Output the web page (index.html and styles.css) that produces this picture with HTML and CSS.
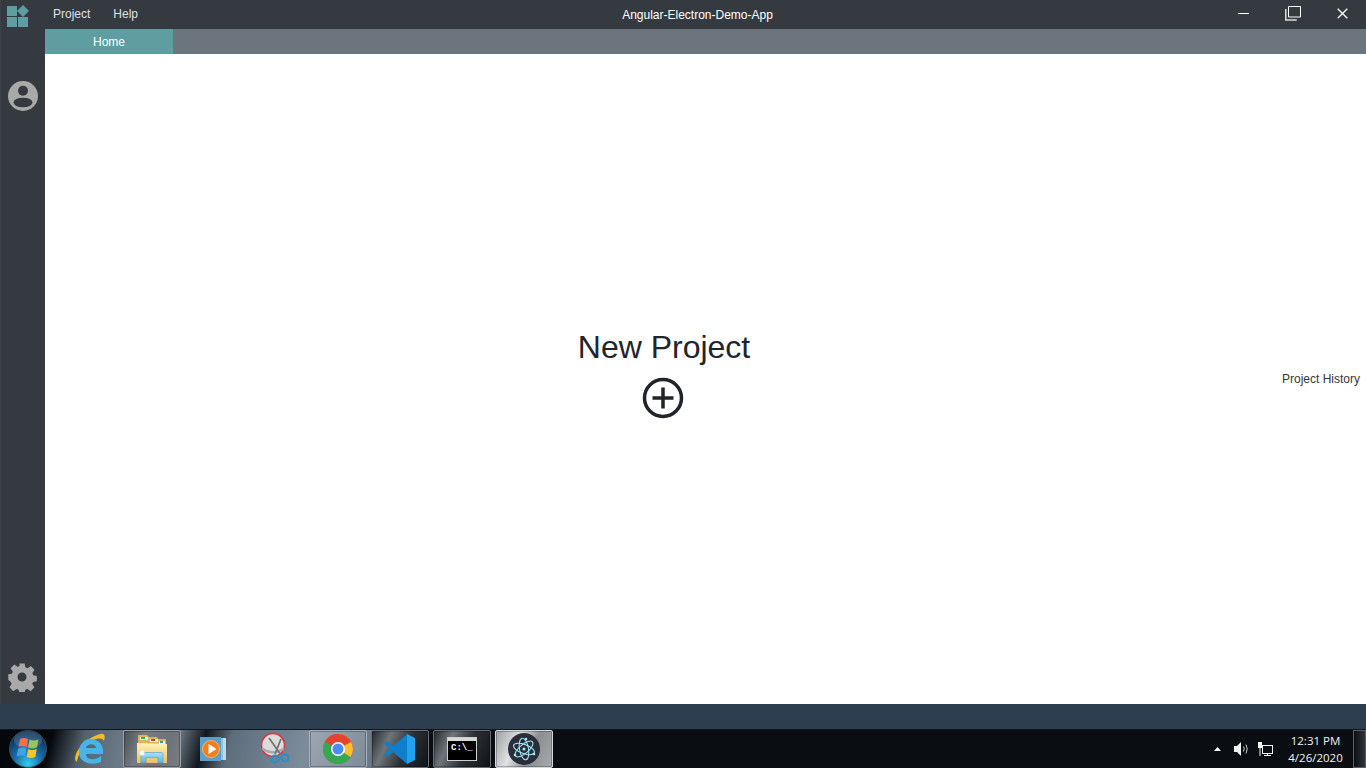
FILE: index.html
```html
<!DOCTYPE html>
<html lang="en">
<head>
<meta charset="utf-8">
<title>Angular-Electron-Demo-App</title>
<link rel="stylesheet" href="styles.css">
</head>
<body>
<div class="app">
  <aside class="rail">
    <div class="rail-logo">
      <svg width="22" height="22" viewBox="0 0 22 22"><rect x="0" y="1" width="10" height="10" fill="#5f9ea0"/><rect x="0" y="12" width="10" height="10" fill="#5f9ea0"/><rect x="11" y="12" width="10" height="10" fill="#5f9ea0"/><polygon points="16,0 22,6 16,12 10,6" fill="#5f9ea0"/></svg>
    </div>
    <div class="rail-user">
      <svg width="30" height="30" viewBox="0 0 30 30"><circle cx="15" cy="15" r="15" fill="#a9a9a9"/><circle cx="15" cy="9.7" r="5" fill="#343a40"/><ellipse cx="15" cy="21.5" rx="9.500" ry="4.800" fill="#343a40"/></svg>
    </div>
    <div class="rail-gear">
      <svg width="30" height="30" viewBox="0 0 24 24"><path fill="#a9a9a9" fill-rule="evenodd" d="M9.6 0h4.800l.6 3.400 1.900.8 2.900-2 3.400 3.400-2 2.900.8 1.900 3.200.6v4.800l-3.300.6-.8 1.900 2 2.900-3.400 3.400-2.900-2-1.900.8-.5 3.400H9.600l-.6-3.400-1.900-.8-2.900 2-3.400-3.400 2-2.900-.8-1.900L-.2 14.400V9.600L3 9l.8-1.900-2-2.900L5.200.8l2.900 2 1.900-.8zM12 8a4 4 0 1 0 0 8 4 4 0 0 0 0-8z" transform="translate(.4 1.200) scale(.9)"/></svg>
    </div>
  </aside>
  <div class="main">
    <header class="titlebar">
      <nav class="menu"><span class="menu-item">Project</span><span class="menu-item">Help</span></nav>
      <div class="app-title">Angular-Electron-Demo-App</div>
      <div class="win-controls">
        <svg class="win-min" width="11" height="11" viewBox="0 0 11 11"><rect x="0" y="5" width="11" height="1" fill="#fff"/></svg>
        <svg class="win-max" width="16" height="15" viewBox="0 0 16 15"><path d="M3.500.5h12v10.500h-12z" fill="none" stroke="#fff"/><path d="M.75 3v11h11" fill="none" stroke="#dcdcdc" stroke-width="1.500"/></svg>
        <svg class="win-close" width="11" height="11" viewBox="0 0 11 11"><path d="M.7.7l9.600 9.600M10.300.7L.7 10.300" stroke="#fff" stroke-width="1.300"/></svg>
      </div>
    </header>
    <div class="tabbar"><div class="tab">Home</div></div>
    <main class="content">
      <div class="new-project">
        <div class="new-title">New Project</div>
        <svg class="new-icon" width="42" height="42" viewBox="0 0 42 42"><circle cx="21" cy="21" r="18.500" fill="none" stroke="#212529" stroke-width="3.500"/><path d="M21 10.500v21M10.500 21h21" stroke="#212529" stroke-width="3.500"/></svg>
      </div>
      <div class="history">Project History</div>
    </main>
  </div>
</div>
<div class="statusbar"></div>
<footer class="taskbar">
  <div class="start">
    <svg width="38" height="38" viewBox="0 0 38 38">
      <defs>
        <radialGradient id="orb" cx="50%" cy="90%" r="80%"><stop offset="0" stop-color="#2fd0f2"/><stop offset=".45" stop-color="#1a6fb0"/><stop offset="1" stop-color="#0c3358"/></radialGradient>
      </defs>
      <circle cx="19" cy="19" r="18.500" fill="url(#orb)" stroke="#3d4b52"/>
      <path d="M11 9q4-2 8 0l-1.300 8q-4-2-8.200 0z" fill="#f0592e"/>
      <path d="M20.500 9.500q4 2 9 0l-1.500 8q-4.500 2-9 0z" fill="#86bf3c"/>
      <path d="M9.200 18.500q4.300-2 8.300 0l-1.300 8q-4-2-8.700 0z" fill="#3ea3e2"/>
      <path d="M19 19q4.500 2 8.800 0l-1.500 8q-4.500 2-8.600 0z" fill="#f9c32c"/>
      <ellipse cx="19" cy="10" rx="14" ry="8.500" fill="#fff" opacity=".14"/>
    </svg>
  </div>
  <div class="task-item">
    <svg width="32" height="32" viewBox="0 0 32 32">
      <path d="M2 29C-2 22 9 6 26 1c4-1 6 1 4 7C28 2 11 7 4.500 23c-1 3-1 5-2.500 6z" fill="#f2bc27"/>
      <path d="M16 6a12 12 0 0 1 13 13v2H12c0 6 9 7 15 2v6c-10 4-22 1-22-10 0-7 5-13 11-13zm-4 9h10c0-5-9-5-10 0z" fill="#47b4ec"/>
    </svg>
  </div>
  <div class="task-item is-open is-folder">
    <svg width="32" height="30" viewBox="0 0 32 30">
      <defs>
        <linearGradient id="folder" x1="0" y1="0" x2="0" y2="1"><stop offset="0" stop-color="#fff2b8"/><stop offset="1" stop-color="#e6c266"/></linearGradient>
        <linearGradient id="glass" x1="0" y1="0" x2="0" y2="1"><stop offset="0" stop-color="#a8e2f6"/><stop offset="1" stop-color="#5cb1d8"/></linearGradient>
      </defs>
      <path d="M2 1h9l2 2h8l1 2h8v24H2z" fill="#d9b65c"/>
      <path d="M4 3h8v3H4zM14 5h8v3h-8zM23 7h6v3h-6z" fill="#f6f2e6"/>
      <rect x="5" y="3" width="4" height="2" fill="#2fb344"/><rect x="15" y="5" width="4" height="2" fill="#cf3c2e"/><rect x="24" y="7" width="3" height="2" fill="#2f93d8"/>
      <path d="M1 9l30 1v19H1z" fill="url(#folder)"/>
      <path d="M5 29v-9q0-1.500 1.500-1.500h19Q27 18.500 27 20v9h-5v-5.500H10V29z" fill="url(#glass)" stroke="#4d9cc4" stroke-width=".6"/>
      <circle cx="6" cy="19" r="2.500" fill="#fff" opacity=".9"/>
    </svg>
  </div>
  <div class="task-item task-media">
    <svg width="26" height="24" viewBox="0 0 26 24">
      <rect x="6" y="1" width="20" height="22" fill="#bcdcee"/><rect x="3" y="1" width="20" height="22" fill="#8fc2de"/><rect x="0" y="0" width="21" height="24" fill="#5c9fc8"/>
      <circle cx="11" cy="12" r="8.500" fill="#f27f1a" stroke="#f8b070"/><path d="M8.500 7l8 5-8 5z" fill="#fff"/>
    </svg>
  </div>
  <div class="task-item">
    <svg width="32" height="34" viewBox="0 0 32 34">
      <circle cx="13" cy="13" r="11.500" fill="#dcdcdc" stroke="#d9363e" stroke-width="1.500"/>
      <path d="M2 15q11 8 22 0v3q-11 7-22 0z" fill="#a8a8a8"/>
      <path d="M9 6l12 17M21 7L15 22" stroke="#747474" stroke-width="1.800"/>
      <circle cx="15" cy="27" r="3.500" fill="none" stroke="#2d8fca" stroke-width="2.200"/><circle cx="25" cy="26" r="3.500" fill="none" stroke="#2d8fca" stroke-width="2.200"/>
    </svg>
  </div>
  <div class="task-item is-open is-chrome">
    <svg width="30" height="30" viewBox="0 0 30 30">
      <circle cx="15" cy="15" r="15" fill="#e4432f"/>
      <path d="M15 15L28 22.500A15 15 0 0 1 8 28.300z" fill="#34a853"/>
      <path d="M15 15L2 7.500A15 15 0 0 0 8 28.300z" fill="#34a853"/>
      <path d="M15 0A15 15 0 0 1 27.500 23L15 15 20 8z" fill="#fbc02d"/>
      <path d="M15 0A15 15 0 0 0 2 7.500L15 15 28 8A15 15 0 0 0 15 0z" fill="#e4432f"/>
      <circle cx="15" cy="15" r="7" fill="#fff"/><circle cx="15" cy="15" r="5.500" fill="#4b8bf5"/>
    </svg>
  </div>
  <div class="task-item is-open is-dark">
    <svg width="32" height="32" viewBox="0 0 32 32">
      <path d="M23 1L9 13 3 8l-3 2.500L6 16l-6 5.500L3 24l6-5 14 12zm0 8.500L14 16l9 6.500z" fill="#0f7fcc"/>
      <path d="M23 1l8 4v22l-8 4z" fill="#22a2ee"/>
    </svg>
  </div>
  <div class="task-item is-open is-dark">
    <div class="cmd"><div class="cmd-bar"></div><div class="cmd-text">C:\_</div></div>
  </div>
  <div class="task-item is-open is-light">
    <svg width="32" height="32" viewBox="0 0 32 32">
      <circle cx="16" cy="16" r="16" fill="#2b2e3a"/>
      <g fill="none" stroke="#9feaf9" stroke-width="1">
        <ellipse cx="16" cy="16" rx="11" ry="4.500" transform="rotate(20 16 16)"/>
        <ellipse cx="16" cy="16" rx="11" ry="4.500" transform="rotate(-40 16 16)"/>
        <ellipse cx="16" cy="16" rx="11" ry="4.500" transform="rotate(80 16 16)"/>
      </g>
      <circle cx="16" cy="16" r="1.500" fill="#9feaf9"/>
      <circle cx="18" cy="6" r="1.300" fill="#9feaf9"/><circle cx="7" cy="22" r="1.300" fill="#9feaf9"/><circle cx="26" cy="21" r="1.300" fill="#9feaf9"/>
    </svg>
  </div>
  <div class="tray">
    <svg class="tray-arrow" width="7" height="4" viewBox="0 0 7 4"><path d="M3.500 0L7 4H0z" fill="#fff"/></svg>
    <svg class="tray-sound" width="16" height="14" viewBox="0 0 16 14"><path d="M0 4h3l4-4v14l-4-4H0z" fill="#f4f4f4"/><path d="M9.500 4.500q1.500 2.500 0 5M12 2.500q2.500 4.500 0 9" fill="none" stroke="#cfcfcf"/></svg>
    <svg class="tray-net" width="15" height="15" viewBox="0 0 15 15"><rect x="4.500" y="3.500" width="10" height="8" fill="none" stroke="#f4f4f4"/><path d="M6 13.500h7M9.500 11.500v2" stroke="#f4f4f4"/><rect x="0" y="0" width="4" height="6" fill="#f4f4f4"/><path d="M2 6v8" stroke="#f4f4f4"/></svg>
    <div class="clock"><div>12:31 PM</div><div>4/26/2020</div></div>
    <div class="show-desktop"></div>
  </div>
</footer>
</body>
</html>
```

FILE: styles.css
```css
* { box-sizing: border-box; }
html, body { margin: 0; height: 100%; overflow: hidden; }
body {
  display: flex;
  flex-direction: column;
  width: 1366px;
  height: 768px;
  font-family: "Liberation Sans", Arial, sans-serif;
  background: #fff;
}
.app { display: flex; height: 704px; }
.rail {
  width: 45px;
  flex: none;
  background: #343a40;
  display: flex;
  flex-direction: column;
  align-items: center;
  padding: 5px 1px 12px 0;
  border-left: 1px solid #3c4248;
}
.rail-logo { height: 22px; margin-left: -9px; }
.rail-user { height: 30px; margin-top: 54px; }
.rail-gear { height: 30px; margin-top: auto; }
.main { flex: 1; display: flex; flex-direction: column; min-width: 0; }
.titlebar {
  height: 29px;
  flex: none;
  background: #343a40;
  color: #fff;
  position: relative;
  display: flex;
  align-items: center;
  justify-content: space-between;
}
.menu { display: flex; gap: 23px; padding: 0 0 2px 8px; }
.menu-item { font-size: 12px; color: #dfe1e4; }
.app-title {
  position: absolute;
  left: 0;
  right: 0;
  margin-left: -16px;
  text-align: center;
  font-size: 12px;
}
.win-controls { display: flex; align-items: center; padding: 0 18px 2px 0; }
.win-min { margin-right: 36px; }
.win-max { margin-right: 36px; }
.tabbar { height: 25px; flex: none; background: #6c757d; display: flex; }
.tab {
  width: 128px;
  background: #5f9ea0;
  color: #fff;
  font-size: 12px;
  text-align: center;
  line-height: 26px;
}
.content {
  flex: 1;
  background: #fff;
  display: flex;
  position: relative;
}
.new-project {
  position: absolute;
  left: 533px;
  top: 274px;
  width: 172px;
  display: flex;
  flex-direction: column;
  align-items: center;
  color: #212529;
}
.new-title { font-size: 32px; line-height: 38px; white-space: nowrap; letter-spacing: -.02px; margin-bottom: 11px; }
.new-icon { margin-right: 2px; }
.history {
  position: absolute;
  right: 6px;
  top: 318px;
  font-size: 12px;
  line-height: 14px;
  color: #33373b;
}
.statusbar { height: 25px; flex: none; background: #2c3e50; }
.taskbar {
  height: 39px;
  flex: none;
  display: flex;
  align-items: stretch;
  border-top: 1px solid #10161c;
  background:
    linear-gradient(105deg, #04080c 0, #05090d 52px, #56636f 84px, #6c7a88 122px, #67747f 175px, #12171c 200px, #5f6e7d 226px, #7c8c9b 300px, #6a7886 368px, #0a0e12 372px, #0a0e12 100%);
}
.start { width: 61px; flex: none; display: flex; align-items: center; justify-content: center; padding-right: 5px; }
.task-item {
  width: 58px;
  flex: none;
  margin-right: 4px;
  display: flex;
  align-items: center;
  justify-content: center;
  border: 1px solid transparent;
  border-radius: 2px;
}
.task-media { padding-right: 2px; }
.is-open {
  border-color: #aab4bc;
  box-shadow: inset 0 0 0 1px rgba(0,0,0,.25);
}
.is-folder {
  border-color: #9aa2a8;
  background: linear-gradient(110deg, #494f56 0, #767c82 30%, #6d7379 70%, #777d83 100%);
}
.is-chrome {
  border-color: #a7b2bc;
  background: linear-gradient(120deg, #9ba7b2 0, #8c98a5 50%, #7d8a97 100%);
}
.is-dark {
  border-color: #6a7076;
  background: linear-gradient(115deg, #24282c 0, #6f767b 28%, #2c3034 58%, #101317 100%);
}
.is-light {
  border-color: #d6d8da;
  background: linear-gradient(115deg, #9ca0a2 0, #e0e2e2 35%, #8a8e90 62%, #a8acae 100%);
}
.cmd { width: 30px; height: 24px; background: #000; border: 1px solid #cfcfcf; }
.cmd-bar { height: 3px; background: #d8d8d8; }
.cmd-text {
  color: #fff;
  font-family: "Liberation Mono", monospace;
  font-size: 9px;
  line-height: 14px;
  padding-left: 3px;
  font-weight: bold;
}
.tray {
  margin-left: auto;
  display: flex;
  align-items: center;
  color: #fff;
}
.tray-arrow { margin-right: 13px; }
.tray-sound { margin-right: 8px; }
.tray-net { margin-right: 14px; }
.clock { font-family: "Open Sans", sans-serif; font-size: 11.5px; line-height: 17px; text-align: center; width: 57px; margin-right: 9px; color: #f2f2f2; }
.show-desktop {
  width: 13px;
  height: 100%;
  border: 1px solid #5a6066;
  background: linear-gradient(90deg, #0c0f12, #30353a);
}
```
